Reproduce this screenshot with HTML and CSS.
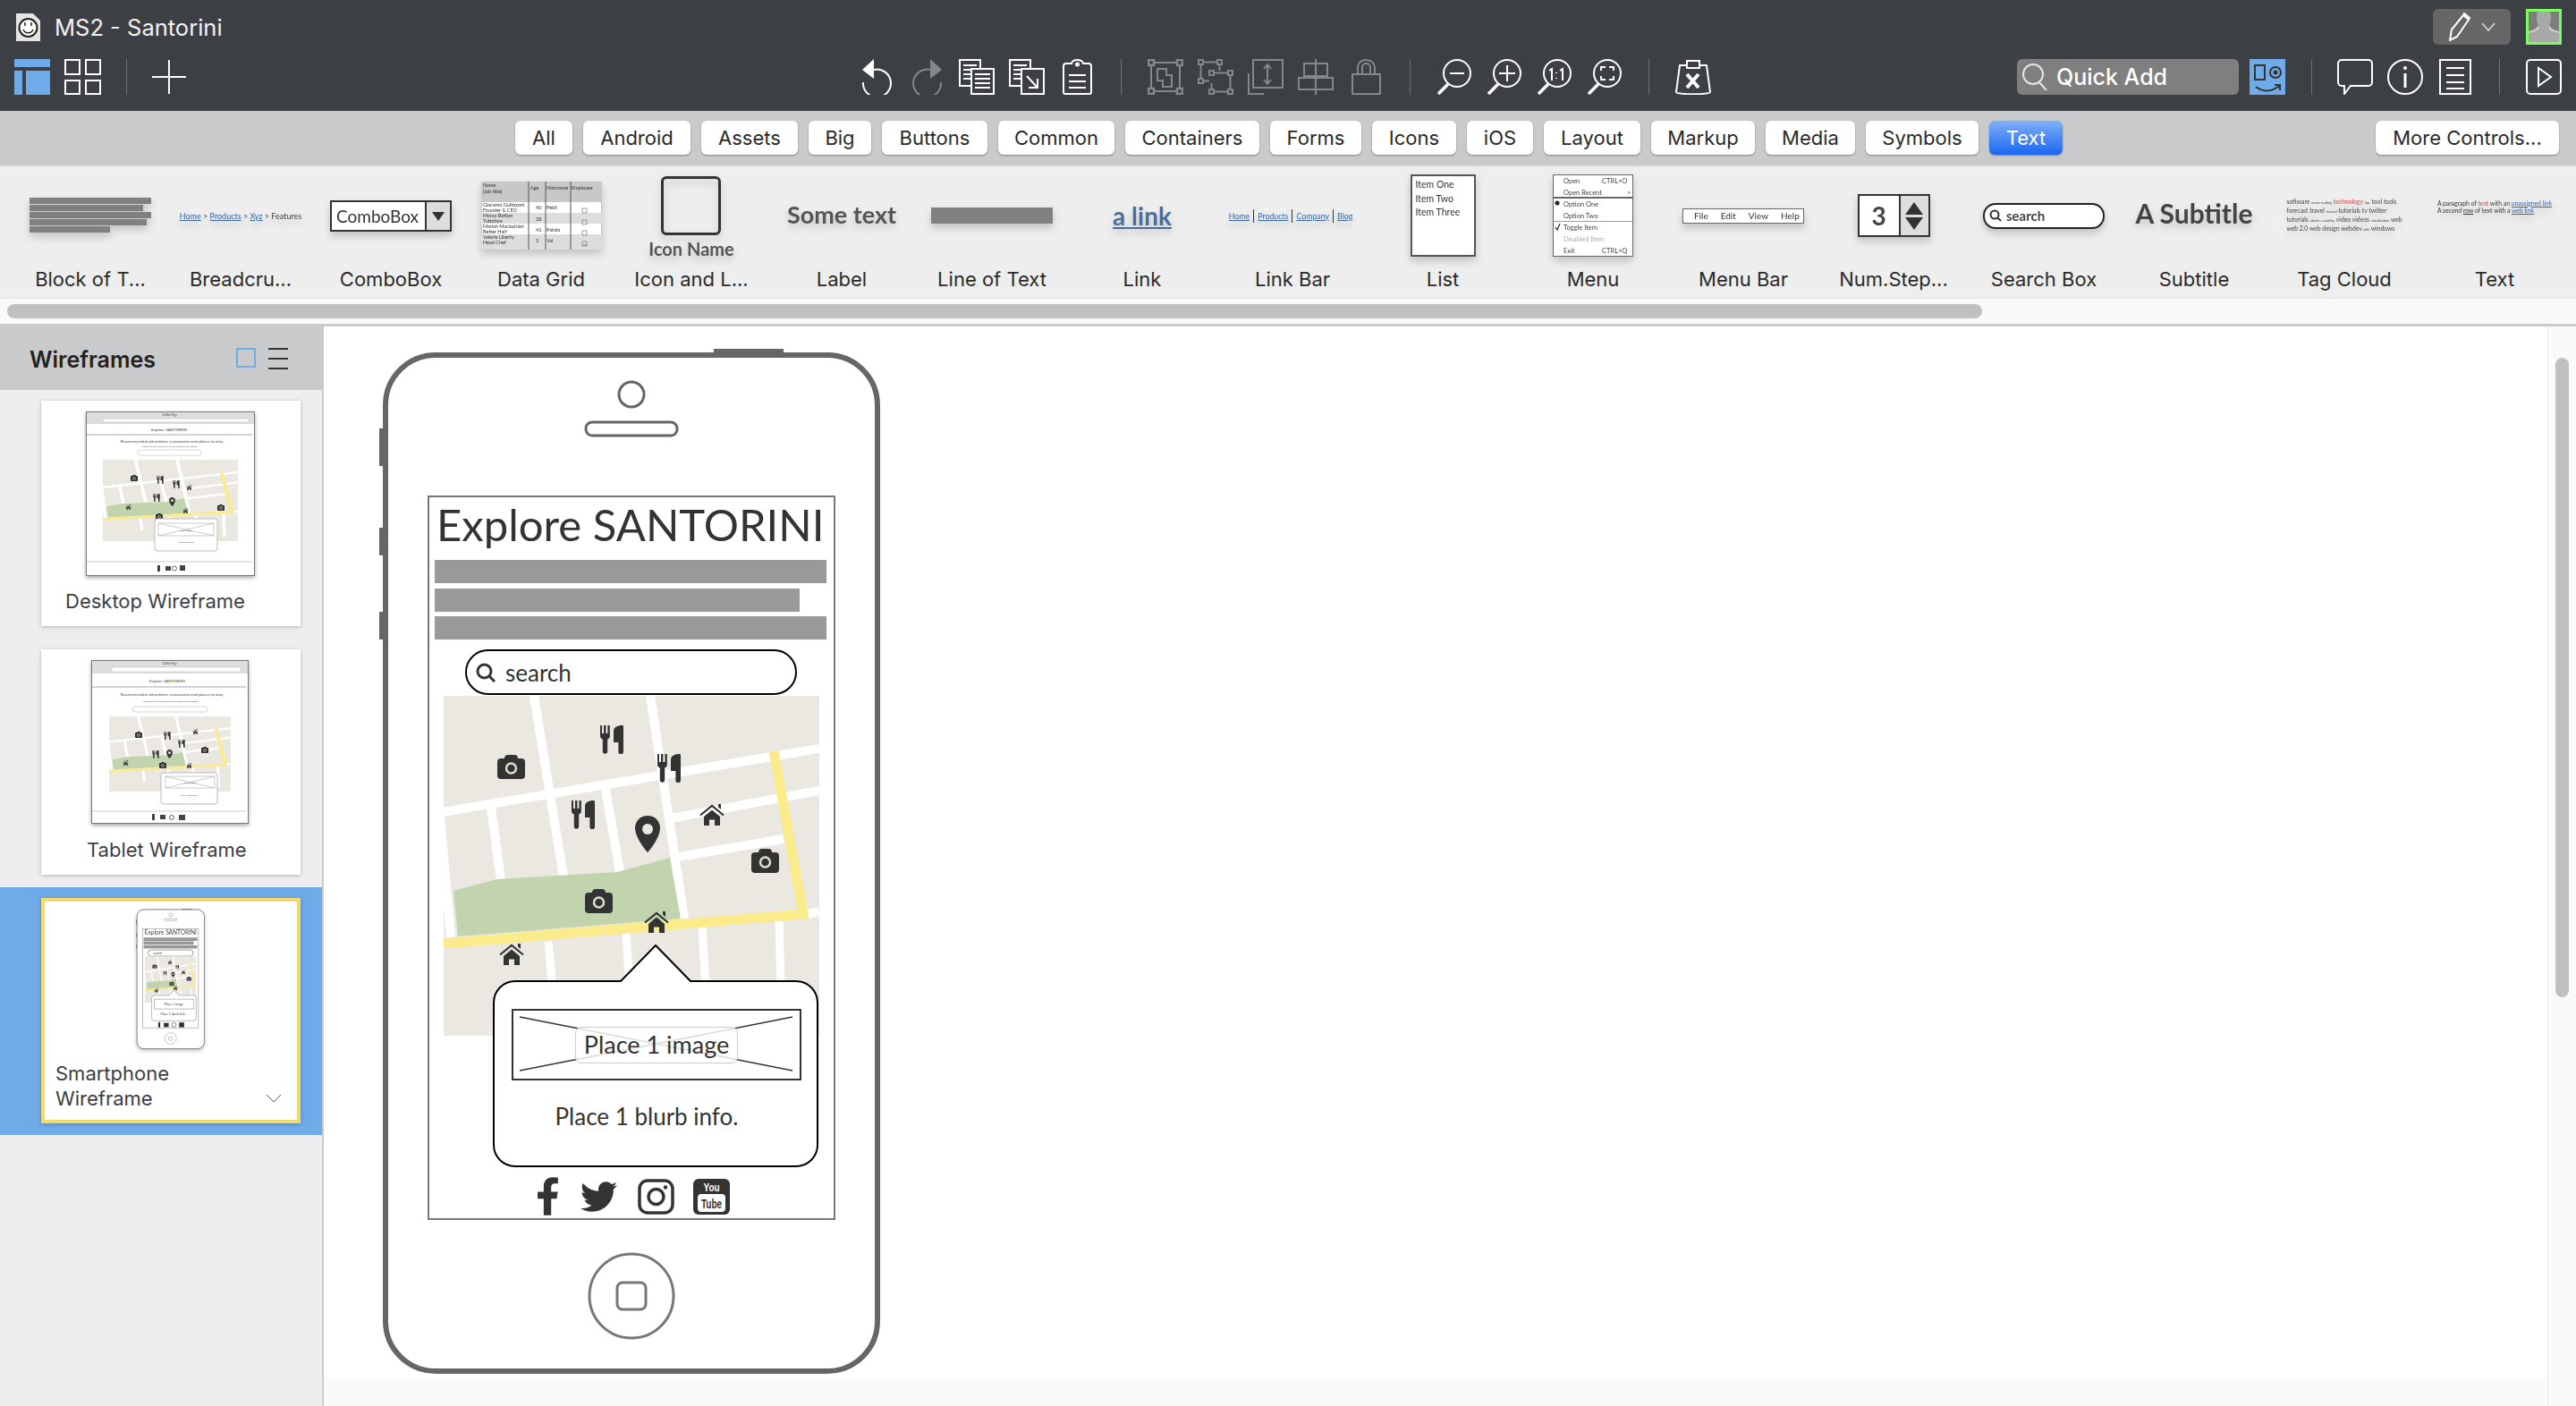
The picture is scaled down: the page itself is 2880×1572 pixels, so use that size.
FILE: index.html
```html
<!DOCTYPE html>
<html lang="en">

<head>
    <meta charset="UTF-8">
    <title>MS2 - Santorini</title>
    <link rel="stylesheet" href="styles.css">
</head>

<body>
    <svg class="defs" width="0" height="0">
        <symbol id="fork" viewBox="0 0 26 32">
            <path d="M0 0h2v9h2V0h2.4v9h2V0h2.4v12c0 2-1.2 3-2.6 3.6V29a2.7 2.7 0 0 1-5.4 0V15.6C1.2 15 0 14 0 12z" />
            <path d="M26 1v28.500a2.800 2.800 0 0 1-5.600 0V19H15V6c0-3.500 4-6 9.500-6A1.500 1.500 0 0 1 26 1z" />
        </symbol>
        <symbol id="camera" viewBox="0 0 31 27">
            <rect y="4" width="31" height="23" rx="4" />
            <rect x="8" width="15" height="10" rx="4" />
            <circle cx="15.500" cy="15" r="5.500" fill="none" stroke="#dfdecf" stroke-width="2.500" />
        </symbol>
        <symbol id="pin" viewBox="0 0 28 41">
            <path d="M14 0C6 0 0 6 0 14c0 9 10 23 14 27 4-4 14-18 14-27C28 6 22 0 14 0z" />
            <circle cx="14" cy="15" r="6" fill="#eae8e1" />
        </symbol>
        <symbol id="house" viewBox="0 0 28 24">
            <path d="M1 12.500 14 2l13 10.500" fill="none" stroke="#333" stroke-width="2.200" />
            <path d="M5 14 14 6.500 23 14v10h-6v-6.500h-6V24H5zM21 0h3v6l-3-2.500z" />
        </symbol>
        <symbol id="map-base" viewBox="0 0 420 380" preserveAspectRatio="none">
            <rect width="420" height="380" fill="#eae8e1" />
            <g fill="none" stroke="#fff" stroke-width="10">
                <path d="M-2 130 420 59M254 137 420 106M262 180 380 160M407 244 420 241" />
                <path d="M101 0 134 202M231 0 269 249M53 125 64 205M181 104 197 197M-4 135 8 270" />
                <path d="M117 275 122 330M204 265 208 330M289 258 293 330M375 252 378 360" stroke-width="9" />
            </g>
            <path d="M11 218 60 205 194 197 253 181 265 249 16 269z" fill="#c2d4ae" />
            <path d="M0 277 402 244 369 62" fill="none" stroke="#fbeb8a" stroke-width="11" />
        </symbol>
        <symbol id="phone-shell" viewBox="424 390 560 1146">
            <path d="M798 390h78v6h-78zM424 479h6v42h-6zM424 590h6v31h-6zM424 684h6v31h-6z" fill="#666" />
            <rect x="431" y="397" width="550" height="1136" rx="56" fill="#fff" stroke="#666" stroke-width="6" />
            <circle cx="706" cy="441" r="14" fill="none" stroke="#666" stroke-width="3" />
            <rect x="655" y="472" width="102" height="15" rx="7" fill="none" stroke="#666" stroke-width="3" />
            <circle cx="706" cy="1449" r="47" fill="none" stroke="#777" stroke-width="3" />
            <rect x="690" y="1434" width="32" height="30" rx="6" fill="none" stroke="#777" stroke-width="3" />
        </symbol>
    </svg>

    <header class="titlebar">
        <div class="title-row">
            <svg class="app-icon" viewBox="0 0 27 31" width="27" height="31">
                <path d="M0 0h19l8 8v23H0z" fill="#e4e4e4" />
                <circle cx="13.500" cy="16" r="10" fill="#fff" stroke="#222" stroke-width="2" />
                <path d="M8 18c2 5 9 5 11 0" fill="none" stroke="#222" stroke-width="1.500" />
                <path d="M10 10v4M17 10v4" stroke="#222" stroke-width="1.500" />
            </svg>
            <span class="app-title">MS2 - Santorini</span>
            <div class="pen-btn">
                <svg viewBox="0 0 30 32" width="30" height="32" fill="none" stroke="#fff" stroke-width="2">
                    <path d="M3 31 5 19 18 3l6 5L11 27zM19 1l6 5-1 2-6-5z" />
                </svg>
                <svg viewBox="0 0 16 10" width="16" height="10" fill="none" stroke="#ddd" stroke-width="1.500">
                    <path d="M1 1l7 8 7-8" />
                </svg>
            </div>
            <svg class="avatar" viewBox="0 0 40 40" width="40" height="40">
                <rect x="1.500" y="1.500" width="37" height="37" fill="#7d7d7d" stroke="#7dfb5f" stroke-width="3" />
                <path d="M13 3h14c2 6 1 13-2 17-1 3 4 5 12 7v10H3V27c8-2 13-4 12-7-3-4-4-11-2-17z" fill="#a8a8a8" />
                <path d="M3 27c8-2 12-3 12-7l-2-1c0 3-5 5-10 6zM37 27c-8-2-12-3-12-7l2-1c0 3 5 5 10 6z" fill="#d0d0d0" />
            </svg>
        </div>
        <div class="tool-row">
            <div class="tool-group tool-group-left">
                <svg class="ic-layout" viewBox="0 0 40 40" width="40" height="40" fill="#6fabe8">
                    <rect width="40" height="9" />
                    <rect y="13" width="9" height="27" />
                    <rect x="13" y="13" width="27" height="27" />
                </svg>
                <svg class="ic-grid" viewBox="0 0 41 40" width="41" height="40" fill="none" stroke="#fff" stroke-width="2">
                    <rect x="1" y="1" width="16" height="16" />
                    <rect x="24" y="1" width="16" height="16" />
                    <rect x="1" y="24" width="16" height="15" />
                    <rect x="24" y="24" width="16" height="15" />
                </svg>
                <span class="tool-sep tool-sep-left"></span>
                <svg viewBox="0 0 38 38" width="38" height="38" stroke="#fff" stroke-width="2">
                    <path d="M0 19h38M19 0v38" />
                </svg>
            </div>
            <div class="tool-group tool-group-center">
                <span class="slot">
                    <svg viewBox="0 0 33 40" width="33" height="40" fill="none" stroke="#fff" stroke-width="2">
                        <path d="M13 12A15.500 15.500 0 1 1 1 26" />
                        <path d="M0 12 13 0v22z" fill="#fff" stroke="none" />
                    </svg>
                </span>
                <span class="slot slot-dim">
                    <svg viewBox="0 0 33 40" width="33" height="40" fill="none" stroke="currentColor" stroke-width="2">
                        <path d="M20 12A15.500 15.500 0 1 0 32 26" />
                        <path d="M33 12 20 0v22z" fill="currentColor" stroke="none" />
                    </svg>
                </span>
                <span class="slot">
                    <svg viewBox="0 0 40 40" width="40" height="40" fill="#3c4045" stroke="#fff" stroke-width="2">
                        <rect x="1" y="1" width="23" height="29" />
                        <path d="M5 7h15M5 12h8M5 17h8M5 22h8" />
                        <rect x="14" y="11" width="25" height="28" />
                        <path d="M18 17h17M18 22h17M18 27h17M18 32h17" />
                    </svg>
                </span>
                <span class="slot">
                    <svg viewBox="0 0 40 40" width="40" height="40" fill="#3c4045" stroke="#fff" stroke-width="2">
                        <rect x="1" y="1" width="23" height="29" />
                        <path d="M5 7h15M5 12h8M5 17h8M5 22h8" />
                        <rect x="14" y="11" width="25" height="28" />
                        <path d="M20 19l11 12M32 22v10H22" fill="none" />
                    </svg>
                </span>
                <span class="slot">
                    <svg viewBox="0 0 33 40" width="33" height="40" fill="none" stroke="#fff" stroke-width="2">
                        <path d="M10 5H4a3 3 0 0 0-3 3v29a2 2 0 0 0 2 2h27a2 2 0 0 0 2-2V8a3 3 0 0 0-3-3h-6a6.500 4 0 0 0-13 0z" />
                        <path d="M7 18h19M7 25h19M7 32h19" />
                        <circle cx="16.500" cy="6" r="1.500" fill="#fff" />
                    </svg>
                </span>
                <span class="tool-sep"></span>
                <span class="slot slot-dim">
                    <svg viewBox="0 0 40 40" width="40" height="40" fill="none" stroke="currentColor" stroke-width="2">
                        <path d="M4 6v28M36 6v28M6 4h28M6 36h28" />
                        <path d="M1 1h6v6H1zM33 1h6v6h-6zM1 33h6v6H1zM33 33h6v6h-6z" stroke-width="2.500" />
                        <path d="M11 11h10v7h6v13H17v-7h-6z" />
                    </svg>
                </span>
                <span class="slot slot-dim">
                    <svg viewBox="0 0 40 40" width="40" height="40" fill="none" stroke="currentColor" stroke-width="2">
                        <rect x="1" y="1" width="5" height="5" />
                        <rect x="22" y="1" width="5" height="5" />
                        <rect x="1" y="22" width="5" height="5" />
                        <rect x="13" y="13" width="5" height="5" />
                        <rect x="34" y="13" width="5" height="5" />
                        <rect x="13" y="34" width="5" height="5" />
                        <rect x="34" y="34" width="5" height="5" />
                        <path d="M6 3.500h16M3.500 6v16M24.500 6v7M6 24.500h7M18 15.500h16M36.500 18v16M15.500 27v7M18 36.500h16" />
                    </svg>
                </span>
                <span class="slot slot-dim">
                    <svg viewBox="0 0 40 40" width="40" height="40" fill="none" stroke="currentColor" stroke-width="2">
                        <rect x="6" y="1" width="33" height="31" />
                        <path d="M1 16v23h17M22 7v20M18 11l4-5 4 5M18 23l4 5 4-5" />
                    </svg>
                </span>
                <span class="slot slot-dim">
                    <svg viewBox="0 0 40 40" width="40" height="40" fill="none" stroke="currentColor" stroke-width="2">
                        <path d="M20 0v40M7 5h26v14H7zM1 21h38v13H1z" />
                    </svg>
                </span>
                <span class="slot slot-dim">
                    <svg viewBox="0 0 33 40" width="33" height="40" fill="none" stroke="currentColor" stroke-width="2">
                        <rect x="1" y="17" width="31" height="22" />
                        <path d="M7 17V9a9.500 8 0 0 1 19 0v8M12 17V9a4.500 4 0 0 1 9 0v8" />
                    </svg>
                </span>
                <span class="tool-sep"></span>
                <span class="slot">
                    <svg viewBox="0 0 38 40" width="38" height="40" fill="none" stroke="#fff" stroke-width="2">
                        <circle cx="22" cy="16" r="15" />
                        <path d="M12 28 1 39" stroke-width="3.500" />
                        <path d="M14 16h16" />
                    </svg>
                </span>
                <span class="slot">
                    <svg viewBox="0 0 38 40" width="38" height="40" fill="none" stroke="#fff" stroke-width="2">
                        <circle cx="22" cy="16" r="15" />
                        <path d="M12 28 1 39" stroke-width="3.500" />
                        <path d="M13 16h18M22 7v18" />
                    </svg>
                </span>
                <span class="slot">
                    <svg viewBox="0 0 38 40" width="38" height="40" fill="none" stroke="#fff" stroke-width="2">
                        <circle cx="22" cy="16" r="15" />
                        <path d="M12 28 1 39" stroke-width="3.500" />
                        <path d="M13 13l3-2v13M21 15v1M21 21v1M25 13l3-2v13" />
                    </svg>
                </span>
                <span class="slot">
                    <svg viewBox="0 0 38 40" width="38" height="40" fill="none" stroke="#fff" stroke-width="2">
                        <circle cx="22" cy="16" r="15" />
                        <path d="M12 28 1 39" stroke-width="3.500" />
                        <path d="M15 13v-4h5M24 9h5v4M29 19v4h-5M20 23h-5v-4" />
                    </svg>
                </span>
                <span class="tool-sep"></span>
                <span class="slot">
                    <svg viewBox="0 0 42 40" width="42" height="40" fill="none" stroke="#fff" stroke-width="2">
                        <path d="M14 7H6L2 37c0 3 38 3 38 0L36 7h-8M14 10V2h14v8z" />
                        <path d="M14 17l13 15M27 17 14 32" stroke-width="4" />
                    </svg>
                </span>
            </div>
            <div class="tool-group tool-group-right">
                <div class="quick-add">
                    <svg viewBox="0 0 28 30" width="28" height="30" fill="none" stroke="#e6e6e6" stroke-width="2">
                        <circle cx="12" cy="12" r="11" />
                        <path d="M19 21l8 9" />
                    </svg>
                    <span>Quick Add</span>
                </div>
                <div class="device-btn">
                    <svg viewBox="0 0 40 40" width="40" height="40" fill="none" stroke="#333" stroke-width="2">
                        <rect x="6" y="7" width="11" height="16" />
                        <circle cx="29" cy="15" r="6" />
                        <circle cx="29" cy="15" r="1.500" fill="#333" />
                        <path d="M7 31c8 6 18 6 26-1M28 29h6v6" />
                    </svg>
                </div>
                <span class="tool-sep tool-sep-right"></span>
                <span class="slot">
                    <svg viewBox="0 0 40 40" width="40" height="40" fill="none" stroke="#fff" stroke-width="2">
                        <path d="M5 1h30a4 4 0 0 1 4 4v21a4 4 0 0 1-4 4H15l-7 9v-9H5a4 4 0 0 1-4-4V5a4 4 0 0 1 4-4z" />
                    </svg>
                </span>
                <span class="slot">
                    <svg viewBox="0 0 40 40" width="40" height="40" fill="none" stroke="#fff" stroke-width="2">
                        <circle cx="20" cy="20" r="19" />
                        <path d="M20 16v16" stroke-width="3" />
                        <circle cx="20" cy="10" r="2" fill="#fff" stroke="none" />
                    </svg>
                </span>
                <span class="slot">
                    <svg viewBox="0 0 36 40" width="36" height="40" fill="none" stroke="#fff" stroke-width="2">
                        <rect x="1" y="1" width="34" height="38" />
                        <path d="M8 10h20M8 18h20M8 26h20M8 33h20" />
                    </svg>
                </span>
                <span class="tool-sep"></span>
                <span class="slot">
                    <svg viewBox="0 0 40 40" width="40" height="40" fill="none" stroke="#fff" stroke-width="2">
                        <rect x="1" y="1" width="38" height="38" rx="4" />
                        <path d="M14 10l14 10-14 10z" />
                    </svg>
                </span>
            </div>
        </div>
    </header>

    <nav class="filter-bar">
        <button class="filter">All</button>
        <button class="filter">Android</button>
        <button class="filter">Assets</button>
        <button class="filter">Big</button>
        <button class="filter">Buttons</button>
        <button class="filter">Common</button>
        <button class="filter">Containers</button>
        <button class="filter">Forms</button>
        <button class="filter">Icons</button>
        <button class="filter">iOS</button>
        <button class="filter">Layout</button>
        <button class="filter">Markup</button>
        <button class="filter">Media</button>
        <button class="filter">Symbols</button>
        <button class="filter filter-on">Text</button>
        <button class="filter filter-more">More Controls...</button>
    </nav>

    <section class="library">
        <div class="lib-item">
            <div class="lib-thumb">
                <div class="pv-block">
                    <i></i><i class="w1"></i><i></i><i class="w2"></i><i class="w3"></i>
                </div>
            </div>
            <span class="lib-name">Block of T...</span>
        </div>
        <div class="lib-item">
            <div class="lib-thumb">
                <div class="pv-crumbs"><u>Home</u> &gt; <u>Products</u> &gt; <u>Xyz</u> &gt; Features</div>
            </div>
            <span class="lib-name">Breadcru...</span>
        </div>
        <div class="lib-item">
            <div class="lib-thumb">
                <div class="pv-combo"><span>ComboBox</span><b></b></div>
            </div>
            <span class="lib-name">ComboBox</span>
        </div>
        <div class="lib-item">
            <div class="lib-thumb">
                <svg class="pv-svg" viewBox="539 203 135 76" width="135" height="76" font-family="Lato" font-size="5.500" fill="#333">
                    <rect x="539" y="203" width="135" height="76" fill="#fff" stroke="#888" />
                    <rect x="539" y="203" width="135" height="23" fill="#c8c8c8" />
                    <rect x="539" y="238" width="135" height="12" fill="#ddd" />
                    <rect x="539" y="262" width="135" height="17" fill="#ddd" />
                    <path d="M592 203v76M611 203v76M639 203v76" stroke="#555" fill="none" />
                    <text x="541" y="209">Name</text>
                    <text x="541" y="216">(job title)</text>
                    <text x="594" y="212">Age</text>
                    <text x="612" y="212">Nickname</text>
                    <text x="640" y="212">Employee</text>
                    <text x="541" y="231">Giacomo Guilizzoni</text>
                    <text x="541" y="237">Founder &amp; CEO</text>
                    <text x="541" y="243">Marco Botton</text>
                    <text x="541" y="249">Tuttofare</text>
                    <text x="541" y="255">Mariah Maclachlan</text>
                    <text x="541" y="261">Better Half</text>
                    <text x="541" y="267">Valerie Liberty</text>
                    <text x="541" y="273">Head Chef</text>
                    <text x="600" y="234">40</text>
                    <text x="612" y="234">Peldi</text>
                    <text x="600" y="247">38</text>
                    <text x="600" y="259">41</text>
                    <text x="612" y="259">Patata</text>
                    <text x="600" y="271">3</text>
                    <text x="612" y="271">Val</text>
                    <path d="M652 233h5v5h-5zM652 246h5v5h-5zM652 258h5v5h-5zM652 270h5v5h-5zM652 274h5" fill="none" stroke="#777" stroke-width=".7" />
                </svg>
            </div>
            <span class="lib-name">Data Grid</span>
        </div>
        <div class="lib-item">
            <div class="lib-thumb">
                <div class="pv-iconlabel"><i></i><span>Icon Name</span></div>
            </div>
            <span class="lib-name">Icon and L...</span>
        </div>
        <div class="lib-item">
            <div class="lib-thumb"><span class="pv-label">Some text</span></div>
            <span class="lib-name">Label</span>
        </div>
        <div class="lib-item">
            <div class="lib-thumb"><div class="pv-line"></div></div>
            <span class="lib-name">Line of Text</span>
        </div>
        <div class="lib-item">
            <div class="lib-thumb"><u class="pv-link">a link</u></div>
            <span class="lib-name">Link</span>
        </div>
        <div class="lib-item">
            <div class="lib-thumb">
                <div class="pv-linkbar"><u>Home</u><u>Products</u><u>Company</u><u>Blog</u></div>
            </div>
            <span class="lib-name">Link Bar</span>
        </div>
        <div class="lib-item">
            <div class="lib-thumb">
                <div class="pv-list"><span>Item One</span><span>Item Two</span><span>Item Three</span></div>
            </div>
            <span class="lib-name">List</span>
        </div>
        <div class="lib-item">
            <div class="lib-thumb">
                <svg class="pv-svg" viewBox="1737 195 90 92" width="90" height="92" font-family="Lato" font-size="7.500" fill="#444">
                    <rect x="1737.500" y="195.500" width="89" height="91" fill="#fff" stroke="#666" />
                    <text x="1749" y="205">Open</text>
                    <text x="1792" y="205">CTRL+O</text>
                    <text x="1749" y="218">Open Recent</text>
                    <text x="1820" y="218">&gt;</text>
                    <path d="M1738 221h88" stroke="#333" stroke-width="1.500" />
                    <circle cx="1742" cy="227" r="2.500" fill="#222" />
                    <text x="1749" y="231">Option One</text>
                    <text x="1749" y="244">Option Two</text>
                    <path d="M1738 247.500h88" stroke="#999" />
                    <path d="M1740 254l2 3 3-7" fill="none" stroke="#222" stroke-width="1.200" />
                    <text x="1749" y="257">Toggle Item</text>
                    <text x="1749" y="270" fill="#aaa">Disabled Item</text>
                    <text x="1749" y="283">Exit</text>
                    <text x="1792" y="283">CTRL+Q</text>
                </svg>
            </div>
            <span class="lib-name">Menu</span>
        </div>
        <div class="lib-item">
            <div class="lib-thumb">
                <div class="pv-menubar"><span>File</span><span>Edit</span><span>View</span><span>Help</span></div>
            </div>
            <span class="lib-name">Menu Bar</span>
        </div>
        <div class="lib-item">
            <div class="lib-thumb">
                <div class="pv-stepper"><span>3</span><b><i class="up"></i><i class="down"></i></b></div>
            </div>
            <span class="lib-name">Num.Step...</span>
        </div>
        <div class="lib-item">
            <div class="lib-thumb">
                <div class="pv-search">
                    <svg viewBox="0 0 14 14" width="14" height="14" fill="none" stroke="#333" stroke-width="2">
                        <circle cx="6" cy="6" r="4.500" />
                        <path d="M9 9l4 4" />
                    </svg>
                    <span>search</span>
                </div>
            </div>
            <span class="lib-name">Search Box</span>
        </div>
        <div class="lib-item">
            <div class="lib-thumb"><span class="pv-subtitle">A Subtitle</span></div>
            <span class="lib-name">Subtitle</span>
        </div>
        <div class="lib-item">
            <div class="lib-thumb">
                <div class="pv-tags">
                    <span>software <small>music reading</small> <em>technology</em> <small>tips</small> tool tools</span>
                    <span>forecast travel <small>tutorial</small> tutorials tv twitter</span>
                    <span>tutorials <small>ubuntu</small> <small>usability</small> video videos <small>visualization</small> web</span>
                    <span>web 2.0 web design webdev <small>wiki</small> windows</span>
                </div>
            </div>
            <span class="lib-name">Tag Cloud</span>
        </div>
        <div class="lib-item">
            <div class="lib-thumb">
                <div class="pv-text">A paragraph of <em>text</em> with an <u>unassigned link</u><br>A second <u class="plain">row</u> of text with a <u>web link</u></div>
            </div>
            <span class="lib-name">Text</span>
        </div>
    </section>
    <div class="lib-scroll"><div class="lib-scroll-thumb"></div></div>

    <main class="workspace">
        <aside class="sidebar">
            <div class="side-head">
                <span class="side-title">Wireframes</span>
                <span class="side-square"></span>
                <svg viewBox="0 0 22 24" width="22" height="24" stroke="#333" stroke-width="2">
                    <path d="M0 1h22M0 12h22M0 23h22" />
                </svg>
            </div>
            <div class="side-row">
                <div class="card">
                    <svg class="card-thumb thumb-desktop" viewBox="96 460 189 184" width="189" height="184" font-family="Lato" fill="#444" text-anchor="middle">
                        <rect x="96.500" y="460.500" width="188" height="183" fill="#fff" stroke="#777" />
                        <rect x="97" y="461" width="187" height="13" fill="#ddd" />
                        <text x="190" y="464.500" font-size="3">A Web Page</text>
                        <rect x="115" y="468" width="163" height="4" fill="#fff" stroke="#bbb" stroke-width=".5" />
                        <text x="189" y="482" font-size="4.500">Explore SANTORINI</text>
                        <path d="M97 486h185" stroke="#aaa" />
                        <text x="192" y="495" font-size="4.600">Recommended attractions, restaurants and places to stay</text>
                        <text x="190" y="500" font-size="2.500">Please click on a marker to see the details of the location.</text>
                        <rect x="154" y="503" width="71" height="6" rx="3" fill="#fff" stroke="#bbb" stroke-width=".6" />
                        <use href="#map-base" x="115" y="514" width="151" height="91" />
                        <g fill="#333">
                            <use href="#camera" x="146" y="531" width="8" height="7" />
                            <use href="#fork" x="175" y="532" width="8" height="9" />
                            <use href="#fork" x="193" y="537" width="8" height="9" />
                            <use href="#house" x="208" y="542" width="7" height="6" />
                            <use href="#fork" x="171" y="552" width="8" height="9" />
                            <use href="#pin" x="189" y="556" width="7" height="10" />
                            <use href="#house" x="140" y="564" width="7" height="6" />
                            <use href="#house" x="204" y="568" width="7" height="6" />
                            <use href="#camera" x="243" y="564" width="8" height="7" />
                            <use href="#camera" x="174" y="574" width="8" height="7" />
                        </g>
                        <rect x="173" y="580" width="70" height="36" rx="3" fill="#fff" stroke="#bbb" />
                        <path d="M177 585h62v14h-62zM177 585l62 14M239 585l-62 14" fill="#fff" stroke="#aaa" stroke-width=".6" />
                        <text x="208" y="594" font-size="2.500">Place image</text>
                        <text x="208" y="607" font-size="2.500">Place blurb info</text>
                        <path d="M97 628h185" stroke="#ccc" />
                        <g fill="#444">
                            <rect x="176" y="632" width="3" height="7" />
                            <rect x="185" y="633" width="6" height="5" />
                            <circle cx="195" cy="635.500" r="2.500" fill="none" stroke="#666" />
                            <rect x="201" y="632" width="6" height="6" />
                        </g>
                    </svg>
                    <div class="card-name card-name-desktop">Desktop Wireframe</div>
                </div>
            </div>
            <div class="side-row">
                <div class="card">
                    <svg class="card-thumb thumb-tablet" viewBox="102 738 176 183" width="176" height="183" font-family="Lato" fill="#444" text-anchor="middle">
                        <rect x="102.500" y="738.500" width="175" height="182" fill="#fff" stroke="#777" />
                        <rect x="103" y="739" width="174" height="14" fill="#ddd" />
                        <text x="190" y="743" font-size="3">A Web Page</text>
                        <rect x="125" y="746" width="144" height="5" fill="#fff" stroke="#bbb" stroke-width=".5" />
                        <text x="187" y="763" font-size="4.500">Explore SANTORINI</text>
                        <path d="M103 768h172" stroke="#aaa" />
                        <text x="192" y="778" font-size="4.600">Recommended attractions, restaurants and places to stay</text>
                        <text x="191" y="785" font-size="2.500">Please click on a marker to see the details of the location.</text>
                        <rect x="148" y="790" width="84" height="6" rx="3" fill="#fff" stroke="#bbb" stroke-width=".6" />
                        <use href="#map-base" x="122" y="801" width="136" height="84" />
                        <g fill="#333">
                            <use href="#camera" x="151" y="818" width="8" height="7" />
                            <use href="#fork" x="183" y="818" width="8" height="9" />
                            <use href="#house" x="215" y="815" width="7" height="6" />
                            <use href="#fork" x="199" y="827" width="8" height="9" />
                            <use href="#camera" x="225" y="835" width="8" height="7" />
                            <use href="#fork" x="170" y="839" width="8" height="9" />
                            <use href="#pin" x="186" y="838" width="7" height="10" />
                            <use href="#house" x="137" y="850" width="7" height="6" />
                            <use href="#camera" x="178" y="852" width="8" height="7" />
                            <use href="#house" x="208" y="853" width="7" height="6" />
                        </g>
                        <rect x="180" y="864" width="63" height="35" rx="3" fill="#fff" stroke="#bbb" />
                        <path d="M185 868h55v13h-55zM185 868l55 13M240 868l-55 13" fill="#fff" stroke="#aaa" stroke-width=".6" />
                        <text x="212" y="876" font-size="2.500">Place image</text>
                        <text x="211" y="890" font-size="2.500">Place 1 blurb info</text>
                        <path d="M103 907h172" stroke="#ccc" />
                        <g fill="#444">
                            <rect x="170" y="910" width="3" height="7" />
                            <rect x="179" y="911" width="6" height="5" />
                            <circle cx="192" cy="914" r="2.500" fill="none" stroke="#666" />
                            <rect x="200" y="911" width="7" height="6" />
                        </g>
                    </svg>
                    <div class="card-name card-name-tablet">Tablet Wireframe</div>
                </div>
            </div>
            <div class="side-row side-row-on">
                <div class="card card-on">
                    <svg class="card-thumb thumb-phone" viewBox="424 390 560 1146" width="77" height="157" font-family="Lato" fill="#444" text-anchor="middle">
                        <use href="#phone-shell" x="424" y="390" width="560" height="1146" />
                        <rect x="479" y="555" width="454" height="807" fill="none" stroke="#888" stroke-width="4" />
                        <text x="706" y="604" font-size="48">Explore SANTORINI</text>
                        <path d="M486 626h438v26H486zM486 657h408v26H486zM486 689h438v26H486z" fill="#999" />
                        <rect x="521" y="727" width="369" height="50" rx="25" fill="#fff" stroke="#555" stroke-width="4" />
                        <text x="600" y="760" font-size="26">search</text>
                        <use href="#map-base" x="496" y="778" width="420" height="380" />
                        <g fill="#333">
                            <use href="#camera" x="556" y="844" width="40" height="34" />
                            <use href="#house" x="680" y="810" width="40" height="34" />
                            <use href="#fork" x="740" y="850" width="40" height="34" />
                            <use href="#fork" x="640" y="900" width="40" height="34" />
                            <use href="#pin" x="710" y="905" width="32" height="46" />
                            <use href="#house" x="790" y="890" width="40" height="34" />
                            <use href="#camera" x="835" y="945" width="40" height="34" />
                            <use href="#camera" x="695" y="985" width="40" height="34" />
                            <use href="#house" x="725" y="1020" width="40" height="34" />
                            <use href="#house" x="570" y="1040" width="40" height="34" />
                        </g>
                        <path d="M575 1097h120l38-41 39 41h119a24 24 0 0 1 24 24v160a24 24 0 0 1-24 24H575a24 24 0 0 1-24-24v-160a24 24 0 0 1 24-24z" fill="#fff" stroke="#888" stroke-width="4" />
                        <rect x="572" y="1128" width="324" height="80" fill="none" stroke="#888" stroke-width="4" />
                        <text x="733" y="1176" font-size="26">Place 1 image</text>
                        <text x="723" y="1256" font-size="26">Place 1 blurb info</text>
                        <g fill="#333">
                            <rect x="605" y="1316" width="16" height="43" />
                            <rect x="650" y="1322" width="40" height="34" />
                            <circle cx="733" cy="1338" r="18" fill="none" stroke="#555" stroke-width="5" />
                            <rect x="775" y="1318" width="41" height="40" />
                        </g>
                    </svg>
                    <div class="card-name card-name-phone">Smartphone<br>Wireframe</div>
                    <svg class="card-chevron" viewBox="0 0 16 8" width="16" height="8" fill="none" stroke="#555" stroke-width="1">
                        <path d="M0 0l8 8 8-8" />
                    </svg>
                </div>
            </div>
        </aside>

        <div class="canvas">
            <div class="canvas-area">
                <div class="phone">
                    <svg class="phone-shell" viewBox="424 390 560 1146" width="560" height="1146">
                        <use href="#phone-shell" x="424" y="390" width="560" height="1146" />
                    </svg>
                    <div class="screen">
                        <h1 class="screen-title">Explore SANTORINI</h1>
                        <div class="text-block"><i></i><i class="short"></i><i></i></div>
                        <div class="screen-search">
                            <svg viewBox="0 0 22 22" width="22" height="22" fill="none" stroke="#333" stroke-width="3">
                                <circle cx="9.500" cy="9.500" r="7.500" />
                                <path d="M15 15l6 6" />
                            </svg>
                            <span>search</span>
                        </div>
                        <div class="map-area">
                            <svg class="map" viewBox="0 0 420 380" width="420" height="380" fill="#333">
                                <use href="#map-base" width="420" height="380" />
                                <use href="#camera" x="60" y="66" width="31" height="27" />
                                <use href="#camera" x="344" y="171" width="31" height="27" />
                                <use href="#camera" x="158" y="216" width="31" height="27" />
                                <use href="#fork" x="175" y="33" width="26" height="32" />
                                <use href="#fork" x="239" y="65" width="26" height="32" />
                                <use href="#fork" x="143" y="117" width="26" height="32" />
                                <use href="#pin" x="214" y="134" width="28" height="41" />
                                <use href="#house" x="286" y="121" width="28" height="24" />
                                <use href="#house" x="224" y="241" width="28" height="24" />
                                <use href="#house" x="62" y="277" width="28" height="24" />
                            </svg>
                            <div class="popup">
                                <svg class="popup-shape" viewBox="551 1056 365 250" width="365" height="250">
                                    <path d="M576 1097h118l39-40 39 40h118a24 24 0 0 1 24 24v159a24 24 0 0 1-24 24H576a24 24 0 0 1-24-24v-159a24 24 0 0 1 24-24z" fill="#fff" stroke="#000" stroke-width="2" />
                                </svg>
                                <div class="popup-body">
                                    <div class="image-holder">
                                        <svg class="image-x" viewBox="0 0 324 80" width="324" height="80" stroke="#333" stroke-width="1.500">
                                            <path d="M9 9 314 69M314 9 9 69" />
                                        </svg>
                                        <span class="image-label">Place 1 image</span>
                                    </div>
                                    <p class="blurb">Place 1 blurb info.</p>
                                </div>
                            </div>
                        </div>
                        <div class="social">
                            <svg viewBox="22 0 276 512" width="23" height="43" fill="#333">
                                <path d="M279.140 288l14.220-92.660h-88.910v-60.130c0-25.350 12.420-50.060 52.240-50.060h40.420V6.260S260.430 0 225.360 0c-73.220 0-121.080 44.380-121.080 124.720v70.620H22.890V288h81.390v224h100.170V288z" />
                            </svg>
                            <svg class="soc-twitter" viewBox="0 48 512 416" width="41" height="34" fill="#333">
                                <path d="M459.370 151.716c.325 4.548.325 9.097.325 13.645 0 138.720-105.583 298.558-298.558 298.558-59.452 0-114.680-17.219-161.137-47.106 8.447.974 16.568 1.299 25.340 1.299 49.055 0 94.213-16.568 130.274-44.832-46.132-.975-84.792-31.188-98.112-72.772 6.498.974 12.995 1.624 19.818 1.624 9.421 0 18.843-1.300 27.614-3.573-48.081-9.747-84.143-51.980-84.143-102.985v-1.299c13.969 7.797 30.214 12.670 47.431 13.319-28.264-18.843-46.781-51.005-46.781-87.391 0-19.492 5.197-37.360 14.294-52.954 51.655 63.675 129.300 105.258 216.365 109.807-1.624-7.797-2.599-15.918-2.599-24.040 0-57.828 46.782-104.934 104.934-104.934 30.213 0 57.502 12.670 76.670 33.137 23.715-4.548 46.456-13.320 66.599-25.340-7.798 24.366-24.366 44.833-46.132 57.827 21.117-2.273 41.584-8.122 60.426-16.243-14.292 20.791-32.161 39.308-52.628 54.253z" />
                            </svg>
                            <svg viewBox="0 0 41 40" width="41" height="40" fill="none" stroke="#333" stroke-width="3.500">
                                <rect x="2" y="2" width="37" height="36" rx="9" />
                                <circle cx="20.500" cy="20" r="8.500" />
                                <circle cx="31" cy="9.500" r="2.200" fill="#333" stroke="none" />
                            </svg>
                            <svg class="soc-youtube" viewBox="0 0 41 40" width="41" height="40" font-family="Liberation Sans" font-weight="700" text-anchor="middle">
                                <rect width="41" height="40" rx="6" fill="#333" />
                                <rect x="5" y="17" width="31" height="20" rx="4" fill="#fff" />
                                <text x="20.500" y="14" font-size="13" fill="#fff" textLength="18" lengthAdjust="spacingAndGlyphs">You</text>
                                <text x="20.500" y="33" font-size="14" fill="#333" textLength="23" lengthAdjust="spacingAndGlyphs">Tube</text>
                            </svg>
                        </div>
                    </div>
                </div>
            </div>
            <div class="vscroll"><div class="vscroll-thumb"></div></div>
        </div>
    </main>
</body>

</html>
```

FILE: styles.css
```css
* {
    box-sizing: border-box;
}
html, body {
    margin: 0;
    padding: 0;
}
body {
    width: 2880px;
    height: 1572px;
    overflow: hidden;
    background: #fff;
    font-family: 'Inter', 'Liberation Sans', sans-serif;
    color: #222;
    display: flex;
    flex-direction: column;
}
svg {
    display: block;
    flex-shrink: 0;
}
.defs {
    position: absolute;
}

/* title bar */
.titlebar {
    height: 124px;
    background-color: #3c4045;
    color: #fff;
}
.title-row {
    height: 60px;
    padding: 10px 16px 10px 18px;
    display: flex;
    align-items: center;
}
.app-title {
    margin-left: 16px;
    font-size: 25.500px;
    color: #f2f2f2;
}
.pen-btn {
    margin-left: auto;
    width: 87px;
    height: 40px;
    background-color: #666;
    border-radius: 6px;
    display: flex;
    align-items: center;
    padding-left: 16px;
    gap: 8px;
}
.avatar {
    margin-left: 17px;
}
.tool-row {
    margin-top: 6px;
    height: 40px;
    padding: 0 8px 0 16px;
    display: flex;
}
.tool-group {
    display: flex;
    align-items: center;
}
.ic-grid {
    margin-left: 16px;
}
.tool-sep {
    width: 1px;
    height: 40px;
    margin: 0 21px;
    background-color: #6d7074;
}
.tool-sep-left {
    margin: 0 28px;
}
.tool-sep-right {
    margin: 0 20px 0 29px;
}
.tool-group-center {
    margin-left: 744px;
}
.tool-group-right {
    margin-left: auto;
}
.slot {
    width: 56px;
    height: 40px;
    display: flex;
    justify-content: center;
    align-items: center;
}
.slot-dim {
    color: #85888b;
}
.quick-add {
    width: 248px;
    height: 40px;
    background-color: #7f7f7f;
    border-radius: 6px;
    display: flex;
    align-items: center;
    padding-left: 6px;
    gap: 10px;
    font-size: 25px;
    font-weight: 500;
    color: #fff;
}
.device-btn {
    margin-left: 12px;
    background-color: #6fabe8;
}

/* category buttons */
.filter-bar {
    height: 62px;
    background-color: #c9cacc;
    padding: 11px 19px 0 576px;
    display: grid;
    grid-template-columns: 64px 120px 108px 70px 118px 130px 150px 102px 94px 74px 108px 116px 100px 126px 82px 1fr 205px;
    grid-template-rows: 38px;
    gap: 12px;
    border-bottom: 1px solid #dcdcdc;
}
.filter {
    padding: 0;
    font-family: 'Inter', 'Liberation Sans', sans-serif;
    font-size: 22px;
    color: #2a2a2a;
    background-color: #fff;
    border: none;
    border-radius: 6px;
    box-shadow: 0 1px 2px rgba(0, 0, 0, 0.35);
}
.filter-on {
    color: #fff;
    background: linear-gradient(#7fb0f8, #1b66f0);
}
.filter-more {
    grid-column: 17;
}

/* control library */
.library {
    height: 147px;
    background-color: #eee;
    padding-left: 17px;
    display: flex;
}
.lib-item {
    width: 168px;
    flex-shrink: 0;
    display: flex;
    flex-direction: column;
    align-items: center;
}
.lib-thumb {
    height: 110px;
    width: 168px;
    display: flex;
    align-items: center;
    justify-content: center;
    white-space: nowrap;
    font-family: 'Lato', sans-serif;
    filter: drop-shadow(0 5px 4px rgba(0, 0, 0, 0.18));
}
.lib-name {
    margin-top: 1px;
    line-height: 30px;
    font-size: 22px;
    color: #2a2a2a;
}
.pv-svg {
    background: #fff;
}
.pv-block {
    width: 136px;
}
.pv-block i {
    display: block;
    height: 7px;
    margin-bottom: 1px;
    background-color: #808080;
}
.pv-block .w1 {
    width: 127px;
}
.pv-block .w2 {
    width: 131px;
}
.pv-block .w3 {
    width: 90px;
}
.pv-crumbs {
    font-size: 9px;
    color: #444;
}
.pv-crumbs u, .pv-linkbar u, .pv-text u {
    color: #3a67a8;
}
.pv-combo {
    width: 136px;
    height: 35px;
    border: 2px solid #333;
    background: #fff;
    display: flex;
    font-size: 19px;
    color: #333;
}
.pv-combo span {
    flex: 1;
    padding-left: 5px;
    line-height: 31px;
}
.pv-combo b {
    width: 28px;
    background-color: #ddd;
    border-left: 2px solid #333;
    position: relative;
}
.pv-combo b::after {
    content: "";
    position: absolute;
    left: 6px;
    top: 11px;
    border-left: 7px solid transparent;
    border-right: 7px solid transparent;
    border-top: 10px solid #333;
}
.pv-iconlabel {
    display: flex;
    flex-direction: column;
    align-items: center;
    padding-top: 5px;
}
.pv-iconlabel i {
    width: 67px;
    height: 66px;
    border: 3px solid #333;
    border-radius: 6px;
}
.pv-iconlabel span {
    margin-top: 2px;
    font-size: 20px;
    line-height: 26px;
    font-weight: 700;
    color: #555;
}
.pv-label {
    margin-top: -3px;
    font-size: 27px;
    font-weight: 700;
    color: #555;
}
.pv-line {
    width: 136px;
    height: 18px;
    background-color: #808080;
}
.pv-link {
    font-size: 28px;
    font-weight: 700;
    color: #4a6f9f;
}
.pv-linkbar {
    display: flex;
    font-size: 8.800px;
}
.pv-linkbar u {
    padding: 2px 4px;
    border-left: 1px solid #333;
}
.pv-linkbar u:first-child {
    border-left: none;
    padding-left: 0;
}
.pv-list {
    width: 73px;
    height: 92px;
    background: #fff;
    border: 2px solid #555;
    padding: 2px 4px;
    display: flex;
    flex-direction: column;
    font-size: 10.500px;
    line-height: 15.500px;
    color: #333;
}
.pv-menubar {
    width: 136px;
    height: 17px;
    background: #fff;
    border: 1px solid #666;
    padding-left: 12px;
    display: flex;
    gap: 14px;
    font-size: 10px;
    line-height: 15px;
    color: #333;
}
.pv-stepper {
    width: 81px;
    height: 48px;
    background: #fff;
    border: 2px solid #333;
    display: flex;
    font-size: 28px;
    font-weight: 700;
    color: #444;
}
.pv-stepper span {
    width: 44px;
    text-align: center;
    line-height: 44px;
}
.pv-stepper b {
    flex: 1;
    background-color: #ddd;
    border-left: 2px solid #333;
    display: flex;
    flex-direction: column;
    align-items: center;
    justify-content: center;
    gap: 3px;
}
.pv-stepper i {
    border-left: 10px solid transparent;
    border-right: 10px solid transparent;
}
.pv-stepper .up {
    border-bottom: 14px solid #333;
}
.pv-stepper .down {
    border-top: 14px solid #333;
}
.pv-search {
    width: 136px;
    height: 29px;
    background: #fff;
    border: 2px solid #222;
    border-radius: 14px;
    padding-left: 5px;
    display: flex;
    align-items: center;
    gap: 5px;
    font-size: 15px;
    font-weight: 700;
    color: #444;
}
.pv-subtitle {
    margin-top: -6px;
    font-size: 30px;
    font-weight: 700;
    color: #444;
}
.pv-tags {
    display: flex;
    flex-direction: column;
    font-size: 6.800px;
    line-height: 9px;
    color: #444;
}
.pv-tags small {
    font-size: 3.800px;
}
.pv-tags em {
    font-style: normal;
    color: #d64545;
}
.pv-text {
    font-size: 6.800px;
    line-height: 8px;
    color: #333;
    margin-top: -21px;
}
.pv-text em {
    font-style: normal;
    color: #d64545;
}
.pv-text .plain {
    color: #333;
}
.lib-scroll {
    height: 32px;
    background-color: #f9f9f9;
    padding: 6px 0 0 8px;
    border-bottom: 3px solid #c9cacc;
    border-top: 1px solid #e6e6e6;
}
.lib-scroll-thumb {
    width: 2208px;
    height: 16px;
    border-radius: 8px;
    background-color: #c0c0c0;
}

/* page list */
.workspace {
    flex: 1;
    display: flex;
    min-height: 0;
}
.sidebar {
    width: 362px;
    background-color: #eee;
    border-right: 2px solid #c9cacc;
    flex-shrink: 0;
}
.side-head {
    height: 71px;
    margin-right: -2px;
    background-color: #c9cacc;
    padding: 24px 40px 0 33px;
    display: flex;
}
.side-title {
    font-size: 25px;
    font-weight: 600;
    line-height: 26px;
    color: #222;
    margin-right: auto;
}
.side-square {
    width: 22px;
    height: 22px;
    border: 2px solid #6fabe8;
    margin-right: 14px;
}
.side-row {
    padding: 12px 0 14px 46px;
}
.side-row-on {
    background-color: #6fabe8;
    padding: 12px 0 13px 46px;
}
.card {
    width: 290px;
    height: 252px;
    background-color: #fff;
    box-shadow: 0 1px 4px rgba(0, 0, 0, 0.25);
    padding-top: 12px;
    position: relative;
}
.card-on {
    border: 4px solid #f5d96b;
    padding-top: 8px;
}
.card-thumb {
    filter: drop-shadow(0 2px 2px rgba(0, 0, 0, 0.35));
}
.thumb-desktop {
    margin-left: 50px;
}
.thumb-tablet {
    margin-left: 56px;
}
.thumb-phone {
    margin-left: 102px;
    filter: drop-shadow(0 2px 2px rgba(0, 0, 0, 0.25));
}
.card-name {
    font-size: 22px;
    color: #3c4045;
    line-height: 28px;
}
.card-name-desktop {
    padding: 14px 0 0 27px;
}
.card-name-tablet {
    padding: 15px 0 0 51px;
}
.card-name-phone {
    padding: 13px 0 0 12px;
}
.card-chevron {
    position: absolute;
    right: 18px;
    bottom: 20px;
}

/* canvas */
.canvas {
    flex: 1;
    display: flex;
    min-width: 0;
}
.canvas-area {
    flex: 1;
    padding: 25px 0 0 62px;
    background: linear-gradient(#fff 1173px, #fafafa 1178px);
}
.phone {
    width: 560px;
    height: 1146px;
    position: relative;
    padding: 164px 0 0 54px;
}
.phone-shell {
    position: absolute;
    left: 0;
    top: 0;
}
.screen {
    position: relative;
    width: 456px;
    height: 810px;
    border: 2px solid #777;
    padding: 0 0 0 6px;
    font-family: 'Lato', sans-serif;
    color: #333;
}
.screen-title {
    margin: 0;
    height: 70px;
    padding-left: 2px;
    font-size: 49px;
    font-weight: 400;
    line-height: 60px;
    white-space: nowrap;
}
.text-block i {
    display: block;
    width: 438px;
    height: 26px;
    margin-bottom: 5.500px;
    background-color: #999;
}
.text-block .short {
    width: 408px;
}
.screen-search {
    width: 371px;
    height: 51px;
    margin: 11px 0 0 34px;
    border: 2.500px solid #000;
    border-radius: 26px;
    display: flex;
    align-items: center;
    padding-left: 10px;
    gap: 11px;
    font-size: 26px;
}
.map-area {
    position: relative;
    height: 538px;
    margin: 1px 0 0 10px;
}
.map {
    position: absolute;
    top: 0;
    left: 0;
}
.popup {
    position: absolute;
    left: 55px;
    top: 278px;
    width: 365px;
    height: 250px;
}
.popup-shape {
    position: absolute;
    left: 0;
    top: 0;
}
.popup-body {
    position: relative;
    padding: 72px 0 0 21px;
}
.image-holder {
    position: relative;
    width: 324px;
    height: 80px;
    border: 2px solid #333;
    display: flex;
    align-items: center;
    justify-content: center;
}
.image-x {
    position: absolute;
    left: -2px;
    top: -2px;
}
.image-label {
    position: relative;
    width: 182px;
    height: 41px;
    background-color: rgba(255, 255, 255, 0.82);
    border: 1.500px solid #ccc;
    border-radius: 7px;
    text-align: center;
    font-size: 27px;
    line-height: 38px;
}
.blurb {
    margin: 22px 0 0 0;
    width: 324px;
    padding-right: 22px;
    text-align: center;
    font-size: 26px;
    line-height: 36px;
}
.social {
    display: flex;
    align-items: center;
    margin-left: 115px;
    gap: 23px;
}
.soc-twitter {
    margin-left: 2px;
}
.soc-youtube {
    margin-left: -2px;
}
.vscroll {
    width: 32px;
    background-color: #fafafa;
    border-left: 1px solid #e8e8e8;
    padding: 35px 0 0 8px;
    flex-shrink: 0;
}
.vscroll-thumb {
    width: 15px;
    height: 715px;
    border-radius: 8px;
    background-color: #c0c0c0;
}
```
